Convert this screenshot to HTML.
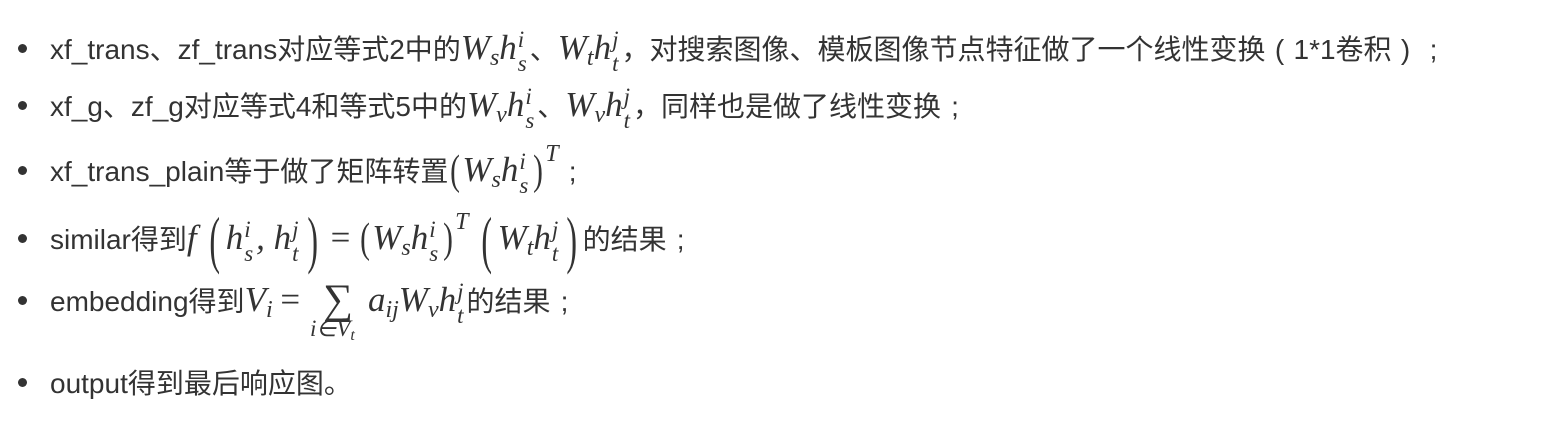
<!DOCTYPE html>
<html><head><meta charset="utf-8"><style>
body{margin:0;width:1550px;height:434px;background:#fff;color:#333;font-family:"Liberation Sans","Noto Sans CJK SC",sans-serif;font-size:28px;position:relative;overflow:hidden}
.l{position:absolute;left:50px;white-space:nowrap;line-height:36px;height:36px}
.c{font-family:"Noto Sans CJK SC",sans-serif}
.w{display:inline-block;width:28px;text-align:center}
.b{position:absolute;left:18px;width:9px;height:9px;border-radius:50%;background:#333}
.m{font-family:"Liberation Serif",serif;font-style:italic;font-size:35px}
.r{font-family:"Liberation Serif",serif;font-size:35px}
.m sub{font-size:24px;line-height:0;vertical-align:-6px}
.ss{display:inline-block;vertical-align:-12px;line-height:20px;font-size:23px;margin-left:1px;margin-right:3px}
.ss span{display:block}
.ss .u{margin-top:-20px;margin-bottom:4px}
.p{font-family:"Liberation Serif",serif;font-size:42px;font-style:normal;display:inline-block;transform:scaleX(0.7);vertical-align:-3px;line-height:0}
.bp{font-family:"Liberation Serif",serif;font-size:64px;font-style:normal;display:inline-block;transform:scaleX(0.5);vertical-align:-12px;line-height:0}
.T{font-size:24px;vertical-align:20px;line-height:0}
</style></head><body>
<div class="b" style="top:44px"></div>
<div class="l" style="top:30px">xf_trans、zf_trans对应等式2中的<span class="m">W<sub>s</sub>h<span class="ss"><span class="u">i</span><span>s</span></span></span>、<span class="m">W<sub>t</sub>h<span class="ss"><span class="u">j</span><span>t</span></span></span><span class="c">，</span>对搜索图像、模板图像节点特征做了一个线性变换<span class="w">(</span>1*1卷积<span class="w">)</span><span class="w">;</span></div>
<div class="b" style="top:101px"></div>
<div class="l" style="top:87px">xf_g、zf_g对应等式4和等式5中的<span class="m">W<sub>v</sub>h<span class="ss"><span class="u">i</span><span>s</span></span></span>、<span class="m">W<sub>v</sub>h<span class="ss"><span class="u">j</span><span>t</span></span></span><span class="c">，</span>同样也是做了线性变换<span class="w">;</span></div>
<div class="b" style="top:166px"></div>
<div class="l" style="top:152px">xf_trans_plain等于做了矩阵转置<span class="m"><span class="p">(</span>W<sub>s</sub>h<span class="ss"><span class="u">i</span><span>s</span></span><span class="p">)</span><span class="T">T</span></span><span class="w">;</span></div>
<div class="b" style="top:234px"></div>
<div class="l" style="top:220px">similar得到<span class="m">f</span> <span class="m"><span class="bp">(</span>h<span class="ss"><span class="u">i</span><span>s</span></span>, h<span class="ss"><span class="u">j</span><span>t</span></span><span class="bp">)</span></span> <span class="r">=</span> <span class="m"><span class="p">(</span>W<sub>s</sub>h<span class="ss"><span class="u">i</span><span>s</span></span><span class="p">)</span><span class="T">T</span></span> <span class="m"><span class="bp">(</span>W<sub>t</sub>h<span class="ss"><span class="u">j</span><span>t</span></span><span class="bp">)</span></span>的结果<span class="w">;</span></div>
<div class="b" style="top:296px"></div>
<div class="l" style="top:282px">embedding得到<span class="m">V<sub>i</sub></span> <span class="r">=</span> <span class="r" style="position:relative;display:inline-block;width:60px;text-align:center;font-size:42px;vertical-align:-2px">∑<span class="m" style="position:absolute;left:2px;top:36px;font-size:23px;line-height:22px">i∈V<sub style="font-size:16px;vertical-align:-4px">t</sub></span></span><span class="m">a<sub>ij</sub>W<sub>v</sub>h<span class="ss"><span class="u">j</span><span>t</span></span></span>的结果<span class="w">;</span></div>
<div class="b" style="top:378px"></div>
<div class="l" style="top:364px">output得到最后响应图<span class="c">。</span></div>
</body></html>
